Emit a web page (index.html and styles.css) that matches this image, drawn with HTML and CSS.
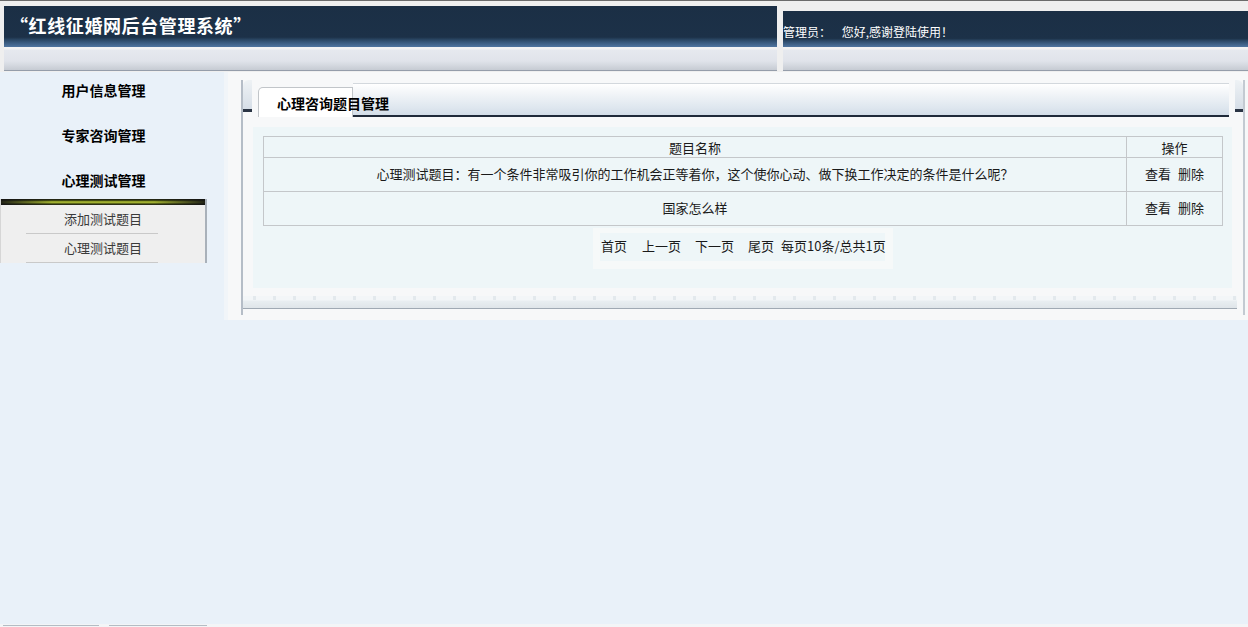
FILE: index.html
```html
<!DOCTYPE html>
<html lang="zh-CN">
<head>
    <meta charset="UTF-8">
    <title>红线征婚网后台管理系统</title>
    <link rel="stylesheet" href="styles.css">
</head>
<body>
    <div class="top">
        <div class="head head-left">
            <div class="banner">
                <h1 class="site-title">“红线征婚网后台管理系统”</h1>
            </div>
            <div class="band"></div>
        </div>
        <div class="head head-right">
            <div class="banner">
                <p class="welcome">管理员：&nbsp;&nbsp;&nbsp;&nbsp;您好,感谢登陆使用！</p>
            </div>
            <div class="band"></div>
        </div>
    </div>

    <div class="main">
        <div class="sidebar">
            <ul class="menu">
                <li>用户信息管理</li>
                <li>专家咨询管理</li>
                <li>心理测试管理</li>
            </ul>
            <div class="submenu">
                <div class="submenu-bar"></div>
                <a href="#" class="submenu-item">添加测试题目</a>
                <a href="#" class="submenu-item">心理测试题目</a>
            </div>
        </div>

        <div class="content">
            <div class="panel">
                <div class="panel-head">
                    <span class="cap"></span>
                    <span class="tab">心理咨询题目管理</span>
                    <span class="tab-line"></span>
                    <span class="cap cap-right"></span>
                </div>
                <div class="panel-body">
                    <table class="list">
                        <tr>
                            <th>题目名称</th>
                            <th class="col-op">操作</th>
                        </tr>
                        <tr>
                            <td>心理测试题目：有一个条件非常吸引你的工作机会正等着你，这个使你心动、做下换工作决定的条件是什么呢？</td>
                            <td><a href="#" class="op">查看</a><a href="#" class="op">删除</a></td>
                        </tr>
                        <tr>
                            <td>国家怎么样</td>
                            <td><a href="#" class="op">查看</a><a href="#" class="op">删除</a></td>
                        </tr>
                    </table>
                    <div class="pager">
                        <div class="pager-inner">
                            <a href="#" class="gap-l">首页</a><a href="#" class="gap-m">上一页</a><a href="#" class="gap-m">下一页</a><a href="#" class="gap-s">尾页</a><span>每页10条/总共1页</span>
                        </div>
                    </div>
                </div>
                <div class="panel-foot"></div>
            </div>
        </div>
    </div>

    <div class="bottom">
        <span class="scroll-bar"></span>
        <span class="scroll-bar wide"></span>
    </div>
</body>
</html>
```

FILE: styles.css
```css
body {
    margin: 0;
    height: 627px;
    overflow: hidden;
    background-color: #e9f1f9;
    font-family: "Noto Sans CJK SC", "Liberation Sans", sans-serif;
    color: #1a1a1a;
}

a {
    color: inherit;
    text-decoration: none;
}

/* header frames */
.top {
    display: flex;
    gap: 6px;
    height: 71px;
    padding-left: 4px;
    border-top: 1px solid #6b6b6b;
    background-color: #efefef;
}

.head {
    display: flex;
    flex-direction: column;
}

.head-left {
    width: 773px;
    margin-top: 5px;
}

.head-right {
    flex: 1;
    margin-top: 10px;
}

.banner {
    flex: 1;
    background: linear-gradient(to bottom, #1b2f45 0, #1c3148 76%, #2a4663 82%, #3b5c80 90%, #5075a0 100%);
}

.band {
    height: 23px;
    margin-bottom: 1px;
    border-bottom: 1px solid #959daa;
    background: linear-gradient(to bottom, #f3f3f3 0, #f3f3f3 2px, #e6e9ef 3px, #e0e3ea 14px, #d5d9e0 18px, #c6cbd3 23px);
}

.site-title {
    margin: 0;
    padding: 8px 0 0 6px;
    font-size: 18px;
    line-height: 22px;
    font-weight: bold;
    letter-spacing: 0.6px;
    color: #ffffff;
    white-space: nowrap;
}

.welcome {
    margin: 0;
    padding-top: 13px;
    font-size: 12px;
    line-height: 16px;
    color: #ffffff;
    white-space: nowrap;
}

/* body */
.main {
    display: flex;
    height: 552px;
}

.sidebar {
    width: 207px;
}

.menu {
    list-style: none;
    margin: -4px 0 0;
    padding: 0;
}

.menu li {
    height: 45px;
    line-height: 45px;
    text-align: center;
    font-size: 14px;
    font-weight: bold;
    color: #000000;
}

.submenu {
    margin-top: -4px;
    border-right: 2px solid #a9b1ba;
    border-left: 1px solid #d6d6d6;
    background-color: #efefef;
}

.submenu-bar {
    height: 6px;
    background:
        linear-gradient(to right, rgba(20, 20, 20, 0.9), rgba(20, 20, 20, 0) 25%, rgba(20, 20, 20, 0) 75%, rgba(20, 20, 20, 0.9)),
        linear-gradient(to bottom, #151515 0, #4a5512 30%, #c4d43c 50%, #5a6618 75%, #151515 100%);
}

.submenu-item {
    display: block;
    height: 29px;
    line-height: 28px;
    text-align: center;
    font-size: 13px;
    color: #3a3a3a;
    background: linear-gradient(to right, transparent 25px, #c9c9c9 25px, #c9c9c9 157px, transparent 157px) no-repeat 0 100% / 100% 1px;
}

.content {
    flex: 1;
    align-self: flex-start;
    height: 240px;
    margin-left: 17px;
    padding: 8px 3px 0 13px;
    border-left: 4px solid #f1f5f9;
    background-color: #f7f8f9;
}

.panel {
    padding-bottom: 6px;
    border-left: 2px solid #b5bdc7;
    border-right: 2px solid #c3cad2;
}

.panel-head {
    display: flex;
    align-items: flex-end;
    height: 37px;
}

.cap {
    align-self: flex-start;
    width: 9px;
    height: 29px;
    border-bottom: 3px solid #2a3444;
    border-top-left-radius: 6px;
    background: linear-gradient(to bottom, #eef2f5, #d6dee7);
}

.cap-right {
    width: 8px;
    border-top-left-radius: 0;
    border-top-right-radius: 6px;
}

.tab {
    position: relative;
    z-index: 1;
    width: 75px;
    height: 29px;
    margin-left: 6px;
    padding-left: 18px;
    border: 1px solid #c1c5c9;
    border-bottom: none;
    border-top-left-radius: 5px;
    background-color: #ffffff;
    font-size: 14px;
    font-weight: bold;
    line-height: 30px;
    color: #000000;
    white-space: nowrap;
}

.tab-line {
    flex: 1;
    height: 31px;
    margin-right: 6px;
    border-top: 1px solid #d3d8dd;
    border-bottom: 2px solid #1f2939;
    background: linear-gradient(to bottom, #ffffff 0, #f2f5f8 30%, #dfe7ef 75%, #d3dde8 100%);
}

.panel-body {
    height: 152px;
    margin: 10px 11px 0 10px;
    padding: 9px 9px 0 10px;
    background-color: #eef6f8;
}

.list {
    width: 960px;
    border-collapse: collapse;
    font-size: 13px;
}

.list th,
.list td {
    padding: 0;
    border: 1px solid #c4c7ca;
    text-align: center;
    font-weight: normal;
}

.list th {
    height: 20px;
    line-height: 17px;
}

.list td {
    height: 30px;
    line-height: 17px;
    padding-bottom: 3px;
}

.list .col-op {
    width: 95px;
}

.op + .op {
    margin-left: 7px;
}

.pager {
    width: 285px;
    margin: 2px auto 0;
    padding: 5px 8px 8px 7px;
    background-color: #f6f9f9;
}

.pager-inner {
    height: 28px;
    line-height: 25px;
    padding-left: 1px;
    font-size: 13px;
    white-space: nowrap;
    background-color: #eef6f8;
}

.gap-l {
    margin-right: 15px;
}

.gap-m {
    margin-right: 14px;
}

.gap-s {
    margin-right: 7px;
}

.panel-foot {
    height: 12px;
    margin: 8px 6px 0 0;
    border-bottom: 1px solid #a0a9b3;
    background:
        repeating-linear-gradient(to right, transparent 0, transparent 10px, #e3e9ed 10px, #e3e9ed 13px, transparent 13px, transparent 20px) no-repeat 0 0 / 100% 4px,
        linear-gradient(to bottom, #f3f6f8 0, #f3f6f8 4px, #e9eef1 5px, #dfe5e9 12px);
}

.bottom {
    display: flex;
    gap: 10px;
    height: 3px;
    padding-left: 3px;
    background-color: #f3f5f7;
}

.scroll-bar {
    width: 96px;
    height: 1px;
    margin-top: 1px;
    background-color: #b4bcc4;
}

.scroll-bar.wide {
    width: 98px;
}
```
